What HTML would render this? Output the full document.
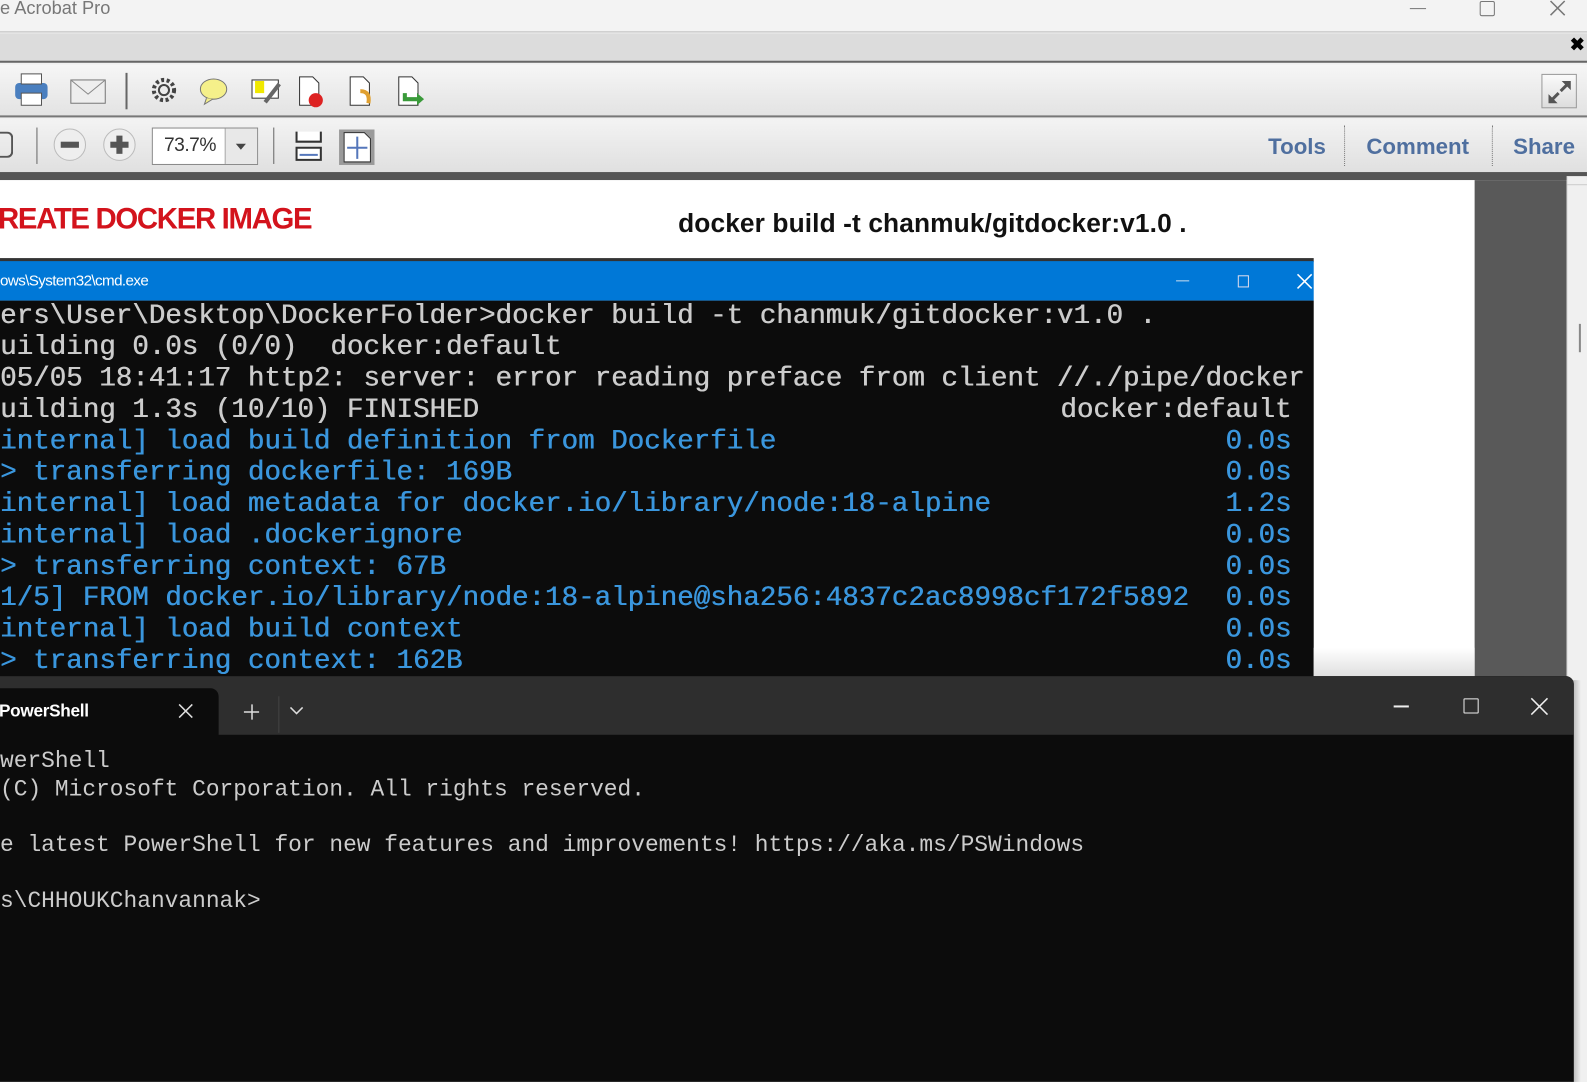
<!DOCTYPE html>
<html><head><meta charset="utf-8"><style>
*{margin:0;padding:0;box-sizing:border-box}
body{width:1587px;height:1069px;overflow:hidden;position:relative;background:#f0f0f0;font-family:"Liberation Sans",sans-serif}
#w{position:absolute;left:0;top:0;width:1568px;height:1057px;transform:scale(1.0121);transform-origin:0 0}
.a{position:absolute}
.cl{position:absolute;left:0;font-family:"Liberation Mono",monospace;font-size:27.2px;line-height:31px;white-space:pre;color:#cccccc;text-shadow:0.5px 0 0 currentColor}
.b{color:#3a96dd}
.t{position:absolute;font-family:"Liberation Mono",monospace;font-size:27.2px;line-height:31px;color:#3a96dd;right:292px;white-space:pre;text-shadow:0.5px 0 0 currentColor}
.pl{position:absolute;left:0;font-family:"Liberation Mono",monospace;font-size:22.6px;line-height:28px;white-space:pre;color:#cccccc}
.tb{position:absolute;font-weight:bold;color:#4f6f9f;font-size:22px;top:132px}
</style></head><body><div id="w">
<div class="a" style="left:0;top:0;width:1568px;height:32px;background:#f3f3f3;border-bottom:1px solid #bbb"></div>
<div class="a" style="left:0;top:-2px;font-size:18px;color:#777">e Acrobat Pro</div>
<div class="a" style="left:1393px;top:8px;width:16px;height:1px;background:#777"></div>
<div class="a" style="left:1462px;top:1px;width:15px;height:15px;border:1.5px solid #777;border-radius:2px"></div>
<svg class="a" style="left:1530px;top:0" width="18" height="18"><path d="M2 1L16 15M16 1L2 15" stroke="#777" stroke-width="1.5"/></svg>
<div class="a" style="left:0;top:33px;width:1568px;height:29px;background:#dcdcdc;border-bottom:2px solid #666"></div>
<div class="a" style="left:1551px;top:34px;font-size:18px;font-weight:bold">✖</div>
<div class="a" style="left:0;top:64px;width:1568px;height:52px;background:linear-gradient(#f6f6f6,#e3e3e3);border-bottom:2px solid #777"></div>
<svg class="a" style="left:12px;top:70px" width="420" height="40">
<rect x="3" y="12" width="32" height="16" rx="4" fill="#4a7fbf"/><rect x="9" y="3" width="20" height="10" fill="#fff" stroke="#555"/><rect x="9" y="22" width="20" height="12" fill="#fff" stroke="#555"/>
<rect x="58" y="9" width="34" height="23" fill="#eee" stroke="#777"/><path d="M58 9L75 23L92 9" stroke="#888" fill="none"/>
<circle cx="150" cy="19" r="10" fill="none" stroke="#444" stroke-width="4" stroke-dasharray="3 2.5"/><circle cx="150" cy="19" r="5" fill="none" stroke="#444" stroke-width="2"/>
<ellipse cx="199" cy="18" rx="13" ry="10" fill="#f5f08a" stroke="#777"/><path d="M192 27L190 33L198 28" fill="#f5f08a" stroke="#777"/>
<rect x="237" y="9" width="26" height="18" fill="#fff" stroke="#333"/><rect x="240" y="10" width="9" height="12" fill="#f0e800"/><path d="M250 31L264 13" stroke="#666" stroke-width="4"/>
<path d="M284 6h13l6 6v22h-19z" fill="#fff" stroke="#333"/><circle cx="300" cy="29" r="7" fill="#d22"/>
<path d="M334 6h13l6 6v22h-19z" fill="#fff" stroke="#333"/><path d="M344 20q10 0 8 12" stroke="#e0a030" stroke-width="4" fill="none"/>
<path d="M382 6h13l6 6v22h-19z" fill="#fff" stroke="#333"/><path d="M388 22v6h12" stroke="#3a9a3a" stroke-width="4" fill="none"/><path d="M400 22l7 6-7 6z" fill="#3a9a3a"/>
</svg>
<div class="a" style="left:124px;top:72px;width:2px;height:36px;background:#666"></div>
<div class="a" style="left:1523px;top:73px;width:35px;height:34px;border:1px solid #999;background:linear-gradient(#fafafa,#ddd)"></div>
<svg class="a" style="left:1526px;top:76px" width="30" height="30"><path d="M6 24L14 16M24 6L16 14" stroke="#555" stroke-width="3"/><path d="M4 26v-9l9 9zM26 4v9l-9-9z" fill="#555"/></svg>
<div class="a" style="left:0;top:118px;width:1568px;height:52px;background:linear-gradient(#f3f3f3,#e0e0e0)"></div>
<div class="a" style="left:0;top:130px;width:13px;height:26px;border:2px solid #555;border-left:none;border-radius:0 6px 6px 0"></div>
<div class="a" style="left:36px;top:126px;width:1px;height:36px;background:#666"></div>
<div class="a" style="left:53px;top:127px;width:32px;height:32px;border-radius:50%;background:#eee;border:1px solid #bbb"></div><div class="a" style="left:60px;top:140px;width:18px;height:6px;background:#555"></div>
<div class="a" style="left:102px;top:127px;width:32px;height:32px;border-radius:50%;background:#eee;border:1px solid #bbb"></div><div class="a" style="left:109px;top:140px;width:18px;height:6px;background:#555"></div><div class="a" style="left:115px;top:134px;width:6px;height:18px;background:#555"></div>
<div class="a" style="left:150px;top:126px;width:105px;height:37px;border:1px solid #888;background:#fff"></div>
<div class="a" style="left:162px;top:133px;font-size:19px;color:#333;letter-spacing:-0.5px">73.7%</div>
<div class="a" style="left:222px;top:127px;width:32px;height:35px;background:#e8e8e8;border-left:1px solid #aaa"></div>
<div class="a" style="left:233px;top:142px;border:5px solid transparent;border-top:6px solid #444"></div>
<div class="a" style="left:270px;top:126px;width:1px;height:36px;background:#666"></div>
<svg class="a" style="left:290px;top:128px" width="80" height="36"><path d="M3 2v10h24V2M3 30V18h24v12z" fill="#fff" stroke="#333" stroke-width="2"/><path d="M6 25h18" stroke="#5577bb" stroke-width="2"/>
<rect x="45" y="-1" width="38" height="36" fill="#9a9a9a"/><path d="M50 3h20l6 6v23h-26z" fill="#fff" stroke="#333"/><path d="M63 7v22M53 18h20" stroke="#5577bb" stroke-width="2"/></svg>
<div class="tb" style="left:1253px">Tools</div>
<div class="a" style="left:1328px;top:124px;height:40px;border-left:1px dotted #777"></div>
<div class="tb" style="left:1350px">Comment</div>
<div class="a" style="left:1474px;top:124px;height:40px;border-left:1px dotted #777"></div>
<div class="tb" style="left:1495px">Share</div>
<div class="a" style="left:0;top:170px;width:1568px;height:8px;background:#555"></div>
<div class="a" style="left:0;top:178px;width:1457px;height:500px;background:#fff"></div>
<div class="a" style="left:1457px;top:178px;width:91px;height:500px;background:#595959"></div>
<div class="a" style="left:1548px;top:174px;width:20px;height:895px;background:#f0f0f0;border-left:1px solid #ddd"></div>
<div class="a" style="left:1548px;top:174px;width:20px;height:9px;border-bottom:1px solid #ccc"></div>
<div class="a" style="left:1560px;top:320px;width:2px;height:28px;background:#888"></div>
<div class="a" style="left:-2px;top:201px;font-size:29px;font-weight:bold;color:#d3131c;letter-spacing:-1.3px">REATE DOCKER IMAGE</div>
<div class="a" style="left:670px;top:205px;font-size:26px;font-weight:bold;color:#111;letter-spacing:0.1px">docker build -t chanmuk/gitdocker:v1.0 .</div>
<div class="a" style="left:0;top:255px;width:1298px;height:4px;background:#333"></div>
<div class="a" style="left:0;top:258px;width:1298px;height:39px;background:#0078d7"></div>
<div class="a" style="left:0;top:269px;font-size:15px;color:#fff;letter-spacing:-0.6px">ows\System32\cmd.exe</div>
<div class="a" style="left:1162px;top:277px;width:13px;height:1px;background:#cde"></div>
<div class="a" style="left:1223px;top:272px;width:11px;height:12px;border:1px solid #dde"></div>
<svg class="a" style="left:1281px;top:270px" width="16" height="16"><path d="M1 1L15 15M15 1L1 15" stroke="#fff" stroke-width="1.5"/></svg>
<div class="a" style="left:0;top:297px;width:1298px;height:380px;background:#0c0c0c;overflow:hidden"></div>
<div class="cl" style="top:297px">ers\User\Desktop\DockerFolder>docker build -t chanmuk/gitdocker:v1.0 .</div>
<div class="cl" style="top:328px">uilding 0.0s (0/0)  docker:default</div>
<div class="cl" style="top:359px">05/05 18:41:17 http2: server: error reading preface from client //./pipe/docker</div>
<div class="cl" style="top:390px">uilding 1.3s (10/10) FINISHED</div>
<div class="t" style="top:390px;color:#ccc">docker:default</div>
<div class="cl b" style="top:421px">internal] load build definition from Dockerfile</div><div class="t" style="top:421px">0.0s</div>
<div class="cl b" style="top:452px">&gt; transferring dockerfile: 169B</div><div class="t" style="top:452px">0.0s</div>
<div class="cl b" style="top:483px">internal] load metadata for docker.io/library/node:18-alpine</div><div class="t" style="top:483px">1.2s</div>
<div class="cl b" style="top:514px">internal] load .dockerignore</div><div class="t" style="top:514px">0.0s</div>
<div class="cl b" style="top:545px">&gt; transferring context: 67B</div><div class="t" style="top:545px">0.0s</div>
<div class="cl b" style="top:576px">1/5] FROM docker.io/library/node:18-alpine@sha256:4837c2ac8998cf172f5892</div><div class="t" style="top:576px">0.0s</div>
<div class="cl b" style="top:607px">internal] load build context</div><div class="t" style="top:607px">0.0s</div>
<div class="cl b" style="top:638px">&gt; transferring context: 162B</div><div class="t" style="top:638px">0.0s</div>
<div class="a" style="left:1298px;top:640px;width:159px;height:30px;background:linear-gradient(#fff,#ddd)"></div>
<div class="a" style="left:1552px;top:672px;width:10px;height:397px;background:linear-gradient(90deg,#aaa,#f0f0f0)"></div>
<div class="a" style="left:0;top:668px;width:1555px;height:401px;background:#0c0c0c;border-radius:0 8px 0 0;overflow:hidden">
 <div class="a" style="left:0;top:0;width:1555px;height:58px;background:#2e2e2e"></div>
 <div class="a" style="left:0;top:12px;width:216px;height:50px;background:#0c0c0c;border-radius:0 8px 0 0"></div>
 <div class="a" style="left:-1px;top:25px;font-size:17px;font-weight:bold;color:#fff;letter-spacing:-0.3px">PowerShell</div>
 <svg class="a" style="left:176px;top:27px" width="16" height="16"><path d="M1 1L14 14M14 1L1 14" stroke="#ddd" stroke-width="1.5"/></svg>
 <svg class="a" style="left:240px;top:27px" width="18" height="18"><path d="M9 1v15M1 8.5h15" stroke="#ddd" stroke-width="1.5"/></svg>
 <div class="a" style="left:275px;top:20px;width:1px;height:36px;background:#444"></div>
 <svg class="a" style="left:285px;top:28px" width="16" height="12"><path d="M2 3l6 6 6-6" stroke="#ddd" stroke-width="1.5" fill="none"/></svg>
 <div class="a" style="left:1377px;top:29px;width:15px;height:1.5px;background:#eee"></div>
 <div class="a" style="left:1446px;top:22px;width:15px;height:15px;border:1.5px solid #eee;border-radius:1px"></div>
 <svg class="a" style="left:1512px;top:21px" width="18" height="18"><path d="M1 1L17 17M17 1L1 17" stroke="#eee" stroke-width="1.5"/></svg>
</div>
<div class="pl" style="top:738px">werShell</div>
<div class="pl" style="top:766px">(C) Microsoft Corporation. All rights reserved.</div>
<div class="pl" style="top:821px">e latest PowerShell for new features and improvements! https://aka.ms/PSWindows</div>
<div class="pl" style="top:876px">s\CHHOUKChanvannak&gt;</div>
</div></body></html>
